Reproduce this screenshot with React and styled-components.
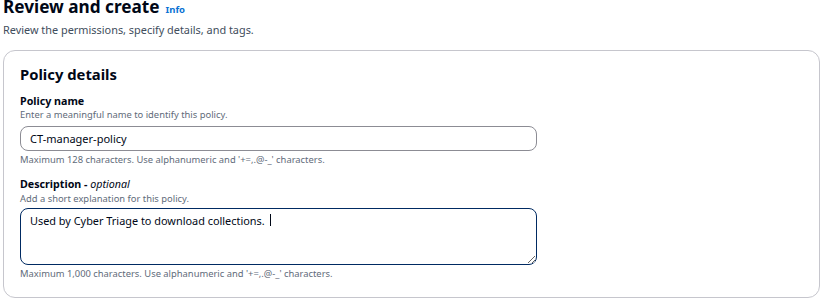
import React from "react";
import styled, { createGlobalStyle } from "styled-components";

const Global = createGlobalStyle`
  html, body { margin: 0; padding: 0; background: #ffffff; }
  body { font-family: "Noto Sans", "Open Sans", Arial, sans-serif; color: #000716; }
  * { box-sizing: border-box; }
`;

const Page = styled.div`
  padding: 0 3px;
  width: 822px;
  height: 306px;
  overflow: hidden;
`;

const Header = styled.div`
  margin-top: -4px;
  display: flex;
  align-items: baseline;
  gap: 6px;
`;

const Title = styled.h1`
  margin: 0;
  font-size: 17.2px;
  line-height: 22px;
  font-weight: 700;
  color: #000716;
`;

const InfoLink = styled.a`
  font-size: 9.5px;
  font-weight: 700;
  color: #0972d3;
  text-decoration: none;
`;

const Subtitle = styled.p`
  margin: 4px 0 0;
  font-size: 10.9px;
  line-height: 16px;
  color: #414d5c;
`;

const Card = styled.section`
  margin-top: 12px;
  width: 817px;
  border: 1px solid #c6c6cd;
  border-radius: 12px;
  padding: 12px 16px 16px;
`;

const CardTitle = styled.h2`
  margin: 0;
  font-size: 14.8px;
  line-height: 22px;
  font-weight: 700;
  color: #000716;
`;

const Field = styled.div`
  display: flex;
  flex-direction: column;
  margin-top: ${(p) => p.$gap}px;
`;

const Label = styled.label`
  font-size: 10.7px;
  line-height: 14px;
  font-weight: 700;
  color: #000716;
  em { font-weight: 400; font-style: italic; }
`;

const Hint = styled.div`
  font-size: 9.4px;
  line-height: 14px;
  color: #5f6b7a;
  margin-top: ${(p) => p.$top || 0}px;
`;

const TextInput = styled.input`
  margin-top: 4px;
  width: 517px;
  height: 25px;
  border: 1px solid #8c8c94;
  border-radius: 8px;
  padding: 0 9px;
  font-family: inherit;
  font-size: 11px;
  color: #000716;
  outline: none;
`;

const AreaWrap = styled.div`
  position: relative;
  margin-top: 2px;
  width: 517px;
  height: 57px;
`;

const TextArea = styled.textarea`
  display: block;
  width: 517px;
  height: 57px;
  border: 1.5px solid #002a62;
  border-radius: 8px;
  padding: 4px 9px;
  font-family: inherit;
  font-size: 10.9px;
  line-height: 16px;
  color: #000716;
  outline: none;
  resize: vertical;
`;

const Caret = styled.span`
  position: absolute;
  left: 250px;
  top: 6px;
  width: 1px;
  height: 12px;
  background: #000716;
  pointer-events: none;
`;

export default function App() {
  return (
    <>
      <Global />
      <Page>
        <Header>
          <Title>Review and create</Title>
          <InfoLink href="#">Info</InfoLink>
        </Header>
        <Subtitle>Review the permissions, specify details, and tags.</Subtitle>
        <Card>
          <CardTitle>Policy details</CardTitle>
          <Field $gap={9}>
            <Label>Policy name</Label>
            <Hint>Enter a meaningful name to identify this policy.</Hint>
            <TextInput defaultValue="CT-manager-policy" />
            <Hint $top={2}>Maximum 128 characters. Use alphanumeric and '+=,.@-_' characters.</Hint>
          </Field>
          <Field $gap={10}>
            <Label>
              Description - <em>optional</em>
            </Label>
            <Hint $top={1}>Add a short explanation for this policy.</Hint>
            <AreaWrap>
              <TextArea defaultValue="Used by Cyber Triage to download collections. " />
              <Caret />
            </AreaWrap>
            <Hint $top={2}>Maximum 1,000 characters. Use alphanumeric and '+=,.@-_' characters.</Hint>
          </Field>
        </Card>
      </Page>
    </>
  );
}
